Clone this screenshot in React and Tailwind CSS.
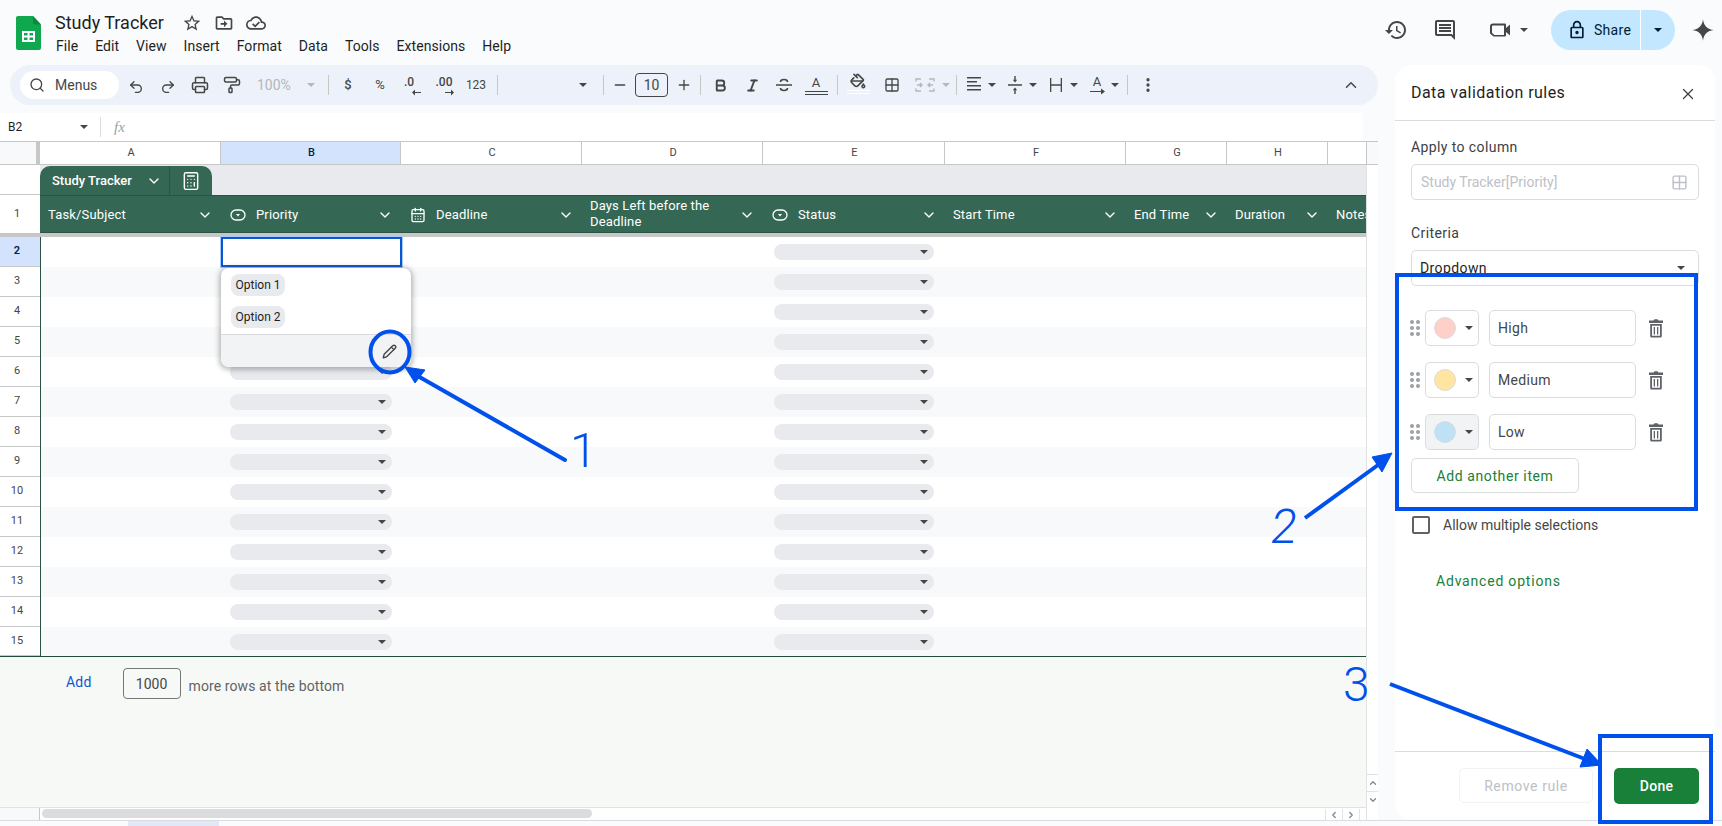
import {
  Search, Undo2, Redo2, Printer, PaintRoller, Minus, Plus, Bold, Italic, PaintBucket,
  Grid2x2, EllipsisVertical, ChevronUp, ChevronDown, X, Pencil, CalendarDays, Calculator,
  ChevronLeft, ChevronRight,
} from 'lucide-react'

const columns = [
  { id: 'A', width: 'w-[181px]' },
  { id: 'B', width: 'w-[180px]' },
  { id: 'C', width: 'w-[181px]' },
  { id: 'D', width: 'w-[181px]' },
  { id: 'E', width: 'w-[182px]' },
  { id: 'F', width: 'w-[181px]' },
  { id: 'G', width: 'w-[101px]' },
  { id: 'H', width: 'w-[101px]' },
  { id: '', width: 'w-[39px]' },
]

const menus = ['File', 'Edit', 'View', 'Insert', 'Format', 'Data', 'Tools', 'Extensions', 'Help']
const rowNumbers = [2, 3, 4, 5, 6, 7, 8, 9, 10, 11, 12, 13, 14, 15]

function Caret({ className = 'text-[#444746]' }) {
  return (
    <svg width="8" height="4" viewBox="0 0 8 4" className={className}>
      <path d="M0 0h8L4 4z" fill="currentColor" />
    </svg>
  )
}

function Icon({ size = 24, d, className = 'text-[#444746]' }) {
  return (
    <svg width={size} height={size} viewBox="0 0 24 24" className={className}>
      <path d={d} fill="currentColor" />
    </svg>
  )
}

function Tool({ children }) {
  return <div className="w-8 h-full flex items-center justify-center text-[#444746] shrink-0">{children}</div>
}

function Sep({ className = '' }) {
  return <div className={`w-px h-[20px] bg-[#c7c7c7] shrink-0 ${className}`} />
}

function SmallArrow({ right }) {
  return (
    <svg width="9" height="7" viewBox="0 0 9 7" className={`absolute top-[24px] text-[#444746] ${right ? 'left-[11px]' : 'left-[10px]'}`}>
      <path d={right ? 'M0 3h6V0.5L9 3.5 6 6.5V4H0z' : 'M9 3H3V0.5L0 3.5 3 6.5V4h6z'} fill="currentColor" />
    </svg>
  )
}

function SheetsLogo() {
  return (
    <svg width="25" height="34" viewBox="0 0 25 34" className="shrink-0">
      <path d="M2 0h15l8 8.5V32a2 2 0 0 1-2 2H2a2 2 0 0 1-2-2V2a2 2 0 0 1 2-2z" fill="#0fa84e" />
      <path d="M17 0l8 8.5h-6a2 2 0 0 1-2-2z" fill="#0a8a3e" />
      <path d="M6 15h13v11H6z M8 17v2.5h3.5V17z M13.5 17v2.5H17V17z M8 21.5V24h3.5v-2.5z M13.5 21.5V24H17v-2.5z" fill="#fff" fillRule="evenodd" />
    </svg>
  )
}

function ChipIcon() {
  return (
    <svg width="16" height="12" viewBox="0 0 16 12" className="shrink-0 text-white">
      <rect x="1" y="1" width="14" height="10" rx="5" fill="none" stroke="currentColor" strokeWidth="1.3" />
      <path d="M6 5h4L8 7.5z" fill="currentColor" />
    </svg>
  )
}

function HeaderCell({ width, icon, label, twoLine }) {
  return (
    <div className={`${width} h-full flex items-center pr-2 pt-[2px] shrink-0 ${icon ? 'pl-[9px]' : 'pl-2'}`}>
      {icon}
      <span className={`flex-1 text-white text-[13px] tracking-[0.15px] ${icon ? 'ml-[10px]' : ''} ${twoLine ? 'leading-[16px] -mt-[2px]' : 'whitespace-nowrap'}`}>{label}</span>
      <ChevronDown size={16} className="text-white shrink-0" />
    </div>
  )
}

function DropChip({ className }) {
  return (
    <div className={`h-4 rounded-full bg-[#e8eaed] flex items-center justify-end pr-[6px] ${className}`}>
      <Caret />
    </div>
  )
}

function PanelItem({ color, label, active }) {
  return (
    <div className="flex items-center h-9">
      <svg width="10" height="16" viewBox="0 0 10 16" className="-ml-px text-[#9aa0a6] shrink-0">
        <g fill="currentColor">
          <circle cx="2" cy="2" r="2" /><circle cx="8" cy="2" r="2" />
          <circle cx="2" cy="8" r="2" /><circle cx="8" cy="8" r="2" />
          <circle cx="2" cy="14" r="2" /><circle cx="8" cy="14" r="2" />
        </g>
      </svg>
      <div className={`ml-[5px] w-[54px] h-9 rounded-[5px] border border-[#dadce0] flex items-center pl-[8px] gap-[9px] ${active ? 'bg-[#f1f3f4]' : 'bg-white'}`}>
        <div className={`w-[22px] h-[22px] rounded-full border border-[#dadce0] ${color}`} />
        <Caret />
      </div>
      <div className="ml-[10px] w-[147px] h-9 rounded-[5px] border border-[#dadce0] flex items-center pl-[8px] text-sm tracking-[0.3px] text-[#444746]">{label}</div>
      <div className="ml-2 w-6 flex items-center justify-center">
        <svg width="24" height="24" viewBox="0 0 24 24" className="text-[#5f6368]">
          <path d="M5 4.5h4.5l1-1.2h3l1 1.2H19V7H5zM6.2 8H17.8V20.2a1.3 1.3 0 0 1-1.3 1.3h-9a1.3 1.3 0 0 1-1.3-1.3zM8 9.8v9.9h8V9.8zM9.7 11h1.3v7.4H9.7zM13 11h1.3v7.4H13z" fill="currentColor" fillRule="evenodd" />
        </svg>
      </div>
    </div>
  )
}

export default function App() {
  return (
    <div className="relative w-[1722px] h-[826px] overflow-hidden bg-[#f9fbfd] font-['Roboto',sans-serif] text-[#1f1f1f]">
      {/* Title bar */}
      <div className="h-[65px] flex pt-[10px]">
        <div className="ml-4 mt-[6px]"><SheetsLogo /></div>
        <div className="ml-[14px]">
          <div className="flex items-center h-[26px]">
            <span className="text-[18px] leading-[26px] w-[122px] whitespace-nowrap">Study Tracker</span>
            <div className="ml-[5px] flex items-center gap-[12px]">
              <Icon size={20} d="M22 9.24l-7.19-.62L12 2 9.19 8.63 2 9.24l5.46 4.73L5.82 21 12 17.27 18.18 21l-1.63-7.03L22 9.24zM12 15.4l-3.76 2.27 1-4.28-3.32-2.88 4.38-.38L12 6.1l1.71 4.04 4.38.38-3.32 2.88 1 4.28L12 15.4z" />
              <Icon size={20} d="M20 6h-8l-2-2H4c-1.1 0-2 .9-2 2v12c0 1.1.9 2 2 2h16c1.1 0 2-.9 2-2V8c0-1.1-.9-2-2-2zm0 12H4V6h5.17l2 2H20v10zm-8-1l4-4-4-4v3H8v2h4v3z" />
              <svg width="20" height="20" viewBox="0 0 24 24" className="text-[#444746]">
                <path d="M19.35 10.04C18.67 6.59 15.64 4 12 4 9.11 4 6.6 5.64 5.35 8.04 2.34 8.36 0 10.91 0 14c0 3.31 2.69 6 6 6h13c2.76 0 5-2.24 5-5 0-2.64-2.05-4.78-4.65-4.96zM19 18H6c-2.21 0-4-1.79-4-4 0-2.05 1.53-3.76 3.56-3.97l1.07-.11.5-.95C8.08 7.14 9.94 6 12 6c2.62 0 4.88 1.86 5.39 4.43l.3 1.5 1.53.11c1.56.1 2.78 1.41 2.78 2.96 0 1.65-1.35 3-3 3z" fill="currentColor" />
                <path d="M8 13l3 3 5-5" fill="none" stroke="currentColor" strokeWidth="2" />
              </svg>
            </div>
          </div>
          <div className="flex gap-[17px] text-sm leading-5 ml-px text-[#1f1f1f] tracking-[0.05px]">
            {menus.map((m) => <span key={m}>{m}</span>)}
          </div>
        </div>
        <div className="ml-auto mr-[6px] flex items-center h-10">
          <Icon d="M13 3c-4.97 0-9 4.03-9 9H1l3.89 3.89.07.14L9 12H6c0-3.87 3.13-7 7-7s7 3.13 7 7-3.13 7-7 7c-1.93 0-3.68-.79-4.94-2.06l-1.42 1.42C8.27 19.99 10.51 21 13 21c4.97 0 9-4.03 9-9s-4.03-9-9-9zm-1 5v5l4.28 2.54.72-1.21-3.5-2.08V8H12z" />
          <div className="ml-[25px]">
            <Icon d="M21.99 4c0-1.1-.89-2-1.99-2H4c-1.1 0-2 .9-2 2v12c0 1.1.9 2 2 2h14l4 4-.01-18zM20 4v13.17L18.83 16H4V4h16zM6 12h12v2H6zm0-3h12v2H6zm0-3h12v2H6z" />
          </div>
          <div className="ml-[31px]">
            <svg width="24" height="24" viewBox="0 0 24 24" className="text-[#444746]">
              <path d="M5 5.500h12a1 1 0 0 1 1 1v3.500l4-3.500v11l-4-3.500v3.500a1 1 0 0 1-1 1H5.500L2 15.500V8.500a3 3 0 0 1 3-3zM5 7.500a1 1 0 0 0-1 1v6.200l2.300 2.300H16V7.500z" fill="currentColor" fillRule="evenodd" />
            </svg>
          </div>
          <div className="ml-2"><Caret /></div>
          <div className="ml-[23px] w-[124px] h-10 rounded-full bg-[#c2e7ff] flex items-center text-[#001d35]">
            <div className="w-[90px] h-10 flex items-center pl-[16px] border-r border-white">
              <Icon size={20} className="text-[#001d35]" d="M18 8h-1V6c0-2.76-2.24-5-5-5S7 3.24 7 6v2H6c-1.1 0-2 .9-2 2v10c0 1.1.9 2 2 2h12c1.1 0 2-.9 2-2V10c0-1.1-.9-2-2-2zM9 6c0-1.66 1.34-3 3-3s3 1.34 3 3v2H9V6zm9 14H6V10h12v10zm-6-3c1.1 0 2-.9 2-2s-.9-2-2-2-2 .9-2 2 .9 2 2 2z" />
              <span className="ml-[7px] text-sm tracking-[0.3px]">Share</span>
            </div>
            <div className="flex-1 flex justify-center"><Caret className="text-[#001d35]" /></div>
          </div>
          <div className="ml-[15px]">
            <Icon size={26} className="text-[#444746]" d="M12 2C12.6 8 16 11.4 22 12 16 12.6 12.6 16 12 22 11.4 16 8 12.6 2 12 8 11.4 11.4 8 12 2z" />
          </div>
        </div>
      </div>

      <div className="flex h-[755px]">
        {/* Left: toolbar, formula bar, grid */}
        <div className="w-[1395px] shrink-0 flex flex-col">
          <div className="ml-[10px] w-[1368px] h-10 shrink-0 rounded-[20px] bg-[#edf2fa] flex items-center">
            <div className="ml-[10px] w-[99px] h-7 rounded-full bg-white flex items-center pl-[9px] shrink-0">
              <Search size={16} strokeWidth={2} className="text-[#444746]" />
              <span className="ml-[10px] text-sm text-[#444746]">Menus</span>
            </div>
            <div className="w-px" />
            <Tool><Undo2 size={16} strokeWidth={2} className="mt-[3px]" /></Tool>
            <Tool><Redo2 size={16} strokeWidth={2} className="mt-[3px]" /></Tool>
            <Tool><Printer size={18} strokeWidth={2} /></Tool>
            <Tool><PaintRoller size={18} strokeWidth={2} /></Tool>
            <div className="w-[80px] h-full flex items-center pl-[9px] shrink-0 text-[#b4b7bb]">
              <span className="w-[36px] text-sm">100%</span>
              <div className="ml-[14px]"><Caret className="text-[#b4b7bb]" /></div>
            </div>
            <Sep />
            <div className="w-[3px]" />
            <Tool><span className="text-[13px] font-medium">$</span></Tool>
            <Tool><span className="text-[13px]">%</span></Tool>
            <Tool>
              <div className="relative w-5 h-full flex items-center justify-center">
                <span className="text-[12px] font-medium -mt-[6px] -ml-[6px]">.0</span>
                <SmallArrow />
              </div>
            </Tool>
            <Tool>
              <div className="relative w-5 h-full flex items-center justify-center">
                <span className="text-[12px] font-medium -mt-[6px]">.00</span>
                <SmallArrow right />
              </div>
            </Tool>
            <Tool><span className="text-xs">123</span></Tool>
            <div className="w-[5px]" />
            <Sep />
            <div className="w-[105px] h-full flex items-center justify-end pr-[16px] shrink-0"><Caret /></div>
            <Sep />
            <Tool><Minus size={16} strokeWidth={2} /></Tool>
            <div className="-ml-px w-[33px] h-[24px] rounded-[4px] border border-[#444746] flex items-center justify-center text-sm text-[#444746] shrink-0">10</div>
            <Tool><Plus size={16} strokeWidth={2} /></Tool>
            <Sep />
            <div className="w-[3px]" />
            <Tool><Bold size={15} strokeWidth={3} /></Tool>
            <Tool><Italic size={15} strokeWidth={3} /></Tool>
            <Tool>
              <svg width="18" height="18" viewBox="0 0 18 18" fill="none" stroke="currentColor" strokeWidth="1.6">
                <path d="M1 9h16M12.5 6c0-1.5-1.5-2.5-3.5-2.5S5.500 4.500 5.500 6M5.500 12c0 1.500 1.500 2.500 3.500 2.500s3.500-1 3.500-2.500" />
              </svg>
            </Tool>
            <Tool>
              <div className="flex flex-col items-center">
                <span className="text-[13px] leading-[14px]">A</span>
                <div className="w-[23px] h-[4px] mt-[1px] border-y border-[#444746]" />
              </div>
            </Tool>
            <div className="w-[5px]" />
            <Sep />
            <div className="w-[4px]" />
            <Tool>
              <div className="flex flex-col items-center -mt-[3px]">
                <PaintBucket size={16} strokeWidth={2.4} />
                <div className="w-[23px] h-[4px] mt-[1px] border-y border-white" />
              </div>
            </Tool>
            <div className="w-[2px]" />
            <Tool><Grid2x2 size={16} strokeWidth={2} /></Tool>
            <div className="w-[48px] h-full flex items-center shrink-0 text-[#b4b7bb]">
              <svg width="34" height="20" viewBox="0 0 34 20" fill="none" stroke="currentColor" strokeWidth="1.4">
                <path d="M13 4H8v2.500M21 4h5v2.500M8 13.500V16h5M26 13.500V16h-5M9 10h5M12 8l2 2-2 2M25 10h-5M22 8l-2 2 2 2" />
              </svg>
              <Caret className="text-[#b4b7bb]" />
            </div>
            <Sep />
            <div className="w-[5px]" />
            <div className="w-[41px] h-full flex items-center pl-[2px] gap-[4px] shrink-0 text-[#444746]">
              <svg width="20" height="16" viewBox="0 0 20 16" fill="currentColor"><path d="M3 0h14v1.500H3zM3 4h10v1.500H3zM3 8h14v1.500H3zM3 12h14v1.500H3z" /></svg>
              <Caret />
            </div>
            <div className="w-[41px] h-full flex items-center pl-[2px] gap-[4px] shrink-0 text-[#444746]">
              <svg width="20" height="18" viewBox="0 0 20 18" fill="currentColor"><path d="M3 8.200h14v1.500H3zM10 6.500 7.800 3.800h1.500V0h1.400v3.800h1.500zM10 11.500l2.200 2.700h-1.500V18H9.300v-3.800H7.800z" /></svg>
              <Caret />
            </div>
            <div className="w-[41px] h-full flex items-center pl-[2px] gap-[4px] shrink-0 text-[#444746]">
              <svg width="20" height="16" viewBox="0 0 20 16" fill="currentColor"><path d="M4 1h1.300v14H4zM14.700 1H16v14h-1.300zM5.300 7.300h9.400v1.400H5.300z" /></svg>
              <Caret />
            </div>
            <div className="w-[41px] h-full flex items-center pl-[2px] gap-[4px] shrink-0 text-[#444746]">
              <div className="relative w-5 h-5 flex justify-center">
                <span className="text-[13px] leading-[14px]">A</span>
                <svg width="15" height="7" viewBox="0 0 15 7" className="absolute bottom-0 left-[3px]" fill="currentColor"><path d="M0 3h11V0.500l4 3-4 3V4H0z" /></svg>
              </div>
              <Caret />
            </div>
            <div className="w-px" />
            <Sep />
            <div className="w-[4px]" />
            <Tool><EllipsisVertical size={18} strokeWidth={2.4} /></Tool>
            <div className="flex-1" />
            <div className="mr-[11px]"><Tool><ChevronUp size={18} strokeWidth={2} /></Tool></div>
          </div>

          {/* Formula bar */}
          <div className="mt-2 w-[1363px] h-7 shrink-0 bg-white flex items-center text-[#1f1f1f]">
            <span className="ml-2 w-[72px] text-xs">B2</span>
            <Caret />
            <div className="ml-3 w-px h-5 bg-[#dadce0]" />
            <span className="ml-[13px] text-[15px] italic text-[#9aa0a6] font-['Liberation_Serif',serif]">fx</span>
          </div>

          {/* Grid */}
          <div className="w-[1378px] flex-1 flex flex-col bg-white relative">
            {/* Column letters */}
            <div className="flex h-6 shrink-0 border-y border-[#c7c7c7] bg-white">
              <div className="w-10 shrink-0 bg-[#f8f9fa] border-r-4 border-[#c7c7c7]" />
              {columns.map((c) => (
                <div
                  key={c.id || 'I'}
                  className={`${c.width} shrink-0 flex items-center justify-center pt-px pl-[2px] text-[11px] border-r border-[#c7c7c7] ${c.id === 'B' ? 'bg-[#d3e3fd] text-[#041e49] font-medium' : 'text-[#444746]'}`}
                >
                  {c.id}
                </div>
              ))}
              <div className="flex-1 bg-[#f8f9fa]" />
            </div>

            <div className="w-[1367px] border-r border-[#e1e3e1] flex flex-col flex-1">
              {/* Table tab */}
              <div className="flex h-[30px] shrink-0">
                <div className="w-10 shrink-0 bg-white border-b border-[#c7c7c7]" />
                <div className="flex-1 bg-[#e8eaed] flex items-end">
                  <div className="flex h-[29px] w-[172px] rounded-t-[10px] bg-[#356854] text-white">
                    <div className="w-[130px] flex items-center pl-3 border-r border-[#2a5343]">
                      <span className="text-[13px] font-medium whitespace-nowrap">Study Tracker</span>
                      <ChevronDown size={16} className="ml-[14px]" />
                    </div>
                    <div className="flex-1 flex items-center justify-center"><Calculator size={20} strokeWidth={1.7} /></div>
                  </div>
                </div>
              </div>

              {/* Header row */}
              <div className="flex h-[38px] shrink-0">
                <div className="w-10 shrink-0 bg-white flex items-center justify-center pr-[6px] text-[11px] text-[#444746]">1</div>
                <div className="flex-1 flex bg-[#356854] border-y border-[#2a5343] overflow-hidden">
                  <HeaderCell width="w-[181px]" label="Task/Subject" />
                  <HeaderCell width="w-[180px]" icon={<ChipIcon />} label="Priority" />
                  <HeaderCell width="w-[181px]" icon={<CalendarDays size={16} className="text-white shrink-0" />} label="Deadline" />
                  <HeaderCell width="w-[181px]" label={<>Days Left before the<br />Deadline</>} twoLine />
                  <HeaderCell width="w-[182px]" icon={<ChipIcon />} label="Status" />
                  <HeaderCell width="w-[181px]" label="Start Time" />
                  <HeaderCell width="w-[101px]" label="End Time" />
                  <HeaderCell width="w-[101px]" label="Duration" />
                  <div className="pl-2 pt-[2px] flex items-center text-white text-[13px] tracking-[0.15px]">Notes</div>
                </div>
              </div>
              <div className="h-1 shrink-0 bg-[#c7c7c7]" />

              {/* Rows */}
              <div className="shrink-0 border-b border-[#1f4d3a]">
                {rowNumbers.map((n) => (
                  <div key={n} className={`flex ${n === 15 ? 'h-[29px]' : 'h-[30px]'}`}>
                    <div className={`w-10 shrink-0 flex items-center justify-center pr-[6px] text-[11px] border-b border-[#c7c7c7] ${n === 2 ? 'bg-[#d3e3fd] text-[#041e49] font-semibold' : 'bg-white text-[#444746]'}`}>
                      {n}
                    </div>
                    <div className={`flex-1 flex items-center border-l border-[#2a5343] ${n % 2 === 0 ? 'bg-white' : 'bg-[#f8f9fa]'}`}>
                      <div className="w-[180px] h-full shrink-0" />
                      {n === 2 ? (
                        <div className="relative w-[181px] -mr-px h-full shrink-0 border-2 border-[#0b57d0] outline outline-1 outline-[#a8c7fa]">
                          <div className="absolute top-[29px] -left-[2px] w-[190px] h-[99px] rounded-lg bg-white shadow-[0_1px_5px_2px_rgba(60,64,67,0.35)] z-20 flex flex-col overflow-hidden">
                            <div className="flex-1 pt-[6px] pl-[10px]">
                              <div className="w-[54px] h-[22px] rounded-lg bg-[#e8eaed] flex items-center justify-center text-xs text-[#1f1f1f]">Option 1</div>
                              <div className="mt-[10px] w-[54px] h-[22px] rounded-lg bg-[#e8eaed] flex items-center justify-center text-xs text-[#1f1f1f]">Option 2</div>
                            </div>
                            <div className="h-[33px] bg-[#f1f3f4] border-t border-[#dadce0] flex items-center justify-end pr-[14px]">
                              <Pencil size={15} strokeWidth={2.2} className="text-[#444746]" />
                            </div>
                          </div>
                        </div>
                      ) : (
                        <div className="w-[180px] shrink-0 pl-[9px] pr-[9px]"><DropChip /></div>
                      )}
                      <div className="w-[362px] h-full shrink-0" />
                      <div className="w-[182px] shrink-0 pl-[11px] pr-[11px]"><DropChip /></div>
                    </div>
                  </div>
                ))}
              </div>

              {/* Add rows */}
              <div className="flex-1 bg-[#f7f9f7] flex items-start pt-[11px] pl-[66px] text-sm">
                <span className="mt-[4px] text-[#0b57d0] tracking-[0.2px]">Add</span>
                <div className="ml-[31px] w-[58px] h-[31px] rounded-[4px] border border-[#747775] bg-transparent flex items-center justify-center text-[#444746]">1000</div>
                <span className="ml-2 mt-[8px] text-[#5f6368] tracking-[0.1px]">more rows at the bottom</span>
              </div>

              {/* Horizontal scrollbar */}
              <div className="h-[13px] shrink-0 flex bg-white border-t border-[#e1e3e1]">
                <div className="w-10 shrink-0 bg-[#f8f9fa] border-r border-[#c7c7c7]" />
                <div className="flex-1 pl-[2px] pt-[1px] flex">
                  <div className="w-[550px] h-[9px] rounded-full bg-[#dadce0]" />
                  <div className="ml-auto flex h-3 text-[#80868b]">
                    <div className="w-[17px] border-l border-[#e1e3e1] flex items-center justify-center"><ChevronLeft size={10} strokeWidth={3} /></div>
                    <div className="w-[17px] border-l border-[#e1e3e1] flex items-center justify-center"><ChevronRight size={10} strokeWidth={3} /></div>
                    <div className="w-[7px] border-l border-[#e1e3e1]" />
                  </div>
                </div>
              </div>
            </div>

            {/* Vertical scroll buttons */}
            <div className="absolute right-0 bottom-[13px] w-[11px] flex flex-col text-[#80868b]">
              <div className="h-[17px] border-t border-[#e1e3e1] flex items-center justify-center"><ChevronUp size={10} strokeWidth={3} /></div>
              <div className="h-[16px] border-t border-[#e1e3e1] flex items-center justify-center"><ChevronDown size={10} strokeWidth={3} /></div>
            </div>
          </div>
        </div>

        {/* Side panel */}
        <div className="w-[320px] shrink-0 h-full rounded-2xl bg-white flex flex-col">
          <div className="h-[56px] shrink-0 border-b border-[#dadce0] flex items-center px-4">
            <span className="text-base tracking-[0.45px] text-[#1f1f1f]">Data validation rules</span>
            <X size={18} strokeWidth={1.8} className="ml-auto mr-[2px] mt-[2px] text-[#444746]" />
          </div>
          <div className="flex-1 px-4 pt-4 flex flex-col">
            <div className="text-sm leading-5 tracking-[0.4px] text-[#3c4043]">Apply to column</div>
            <div className="mt-[7px] h-9 w-[288px] shrink-0 rounded-[5px] border border-[#dadce0] flex items-center pl-[9px] pr-[10px] text-sm text-[#bdc1c6]">
              <span>Study Tracker[Priority]</span>
              <Grid2x2 size={17} strokeWidth={2} className="ml-auto text-[#bdc1c6]" />
            </div>
            <div className="mt-[23px] text-sm leading-5 tracking-[0.4px] text-[#3c4043]">Criteria</div>
            <div className="mt-[7px] h-9 w-[288px] shrink-0 rounded-[5px] border border-[#dadce0] flex items-center pl-[8px] pr-[13px] text-sm tracking-[0.4px] text-[#1f1f1f]">
              <span>Dropdown</span>
              <div className="ml-auto"><Caret /></div>
            </div>
            <div className="mt-6 flex flex-col gap-4">
              <PanelItem color="bg-[#ffcfc9]" label="High" />
              <PanelItem color="bg-[#ffe5a0]" label="Medium" />
              <PanelItem color="bg-[#bfe1f6]" label="Low" active />
            </div>
            <div className="mt-2 w-[168px] h-[35px] rounded-[5px] border border-[#dadce0] flex items-center justify-center text-sm tracking-[0.6px] text-[#188038]">Add another item</div>
            <div className="mt-[22px] flex items-center">
              <div className="ml-px w-[18px] h-[18px] rounded-[2px] border-2 border-[#5f6368]" />
              <span className="ml-[13px] text-sm text-[#444746]">Allow multiple selections</span>
            </div>
            <div className="mt-[36px] ml-[25px] text-sm leading-5 tracking-[0.8px] text-[#188038]">Advanced options</div>
          </div>
          <div className="h-[69px] shrink-0 border-t border-[#dadce0] flex justify-end items-start pt-[16px] pr-4 gap-[21px]">
            <div className="w-[134px] h-[35px] rounded-[5px] border border-[#f1f3f4] flex items-center justify-center text-sm tracking-[0.6px] text-[#bdc1c6]">Remove rule</div>
            <div className="w-[85px] h-9 rounded-[5px] bg-[#188038] flex items-center justify-center text-sm font-medium tracking-[0.3px] text-white">Done</div>
          </div>
        </div>
      </div>

      {/* Bottom sheet bar */}
      <div className="h-[6px] border-t border-[#dadce0]">
        <div className="ml-[128px] w-[91px] h-full bg-[#e1e9f7]" />
      </div>

      {/* Annotations drawn over the screenshot */}
      <svg width="1722" height="826" viewBox="0 0 1722 826" className="absolute inset-0 z-30 pointer-events-none" fill="none" stroke="#0050ec">
        <ellipse cx="390" cy="352" rx="19.500" ry="20.500" strokeWidth="4" />
        <path d="M565 460 416 375" strokeWidth="4" strokeLinecap="round" />
        <path d="M405 367l20 3-10 13z" fill="#0050ec" strokeWidth="1" />
        <rect x="1397" y="275" width="299" height="234" strokeWidth="4" />
        <path d="M1305 518l73-53" strokeWidth="4" />
        <path d="M1392 453l-20 4 10 15z" fill="#0050ec" strokeWidth="1" />
        <path d="M1390 684l195 75" strokeWidth="4" />
        <path d="M1602 765l-15-16-7 18z" fill="#0050ec" strokeWidth="1" />
        <rect x="1600" y="736" width="111" height="86" strokeWidth="4" />
      </svg>
      <span className="absolute z-30 left-[570px] top-[426px] text-[49px] leading-none font-light text-[#0050ec]">1</span>
      <span className="absolute z-30 left-[1271px] top-[503px] text-[48px] leading-none font-light italic text-[#0050ec]">2</span>
      <span className="absolute z-30 left-[1343px] top-[661px] text-[48px] leading-none font-light text-[#0050ec]">3</span>
    </div>
  )
}
